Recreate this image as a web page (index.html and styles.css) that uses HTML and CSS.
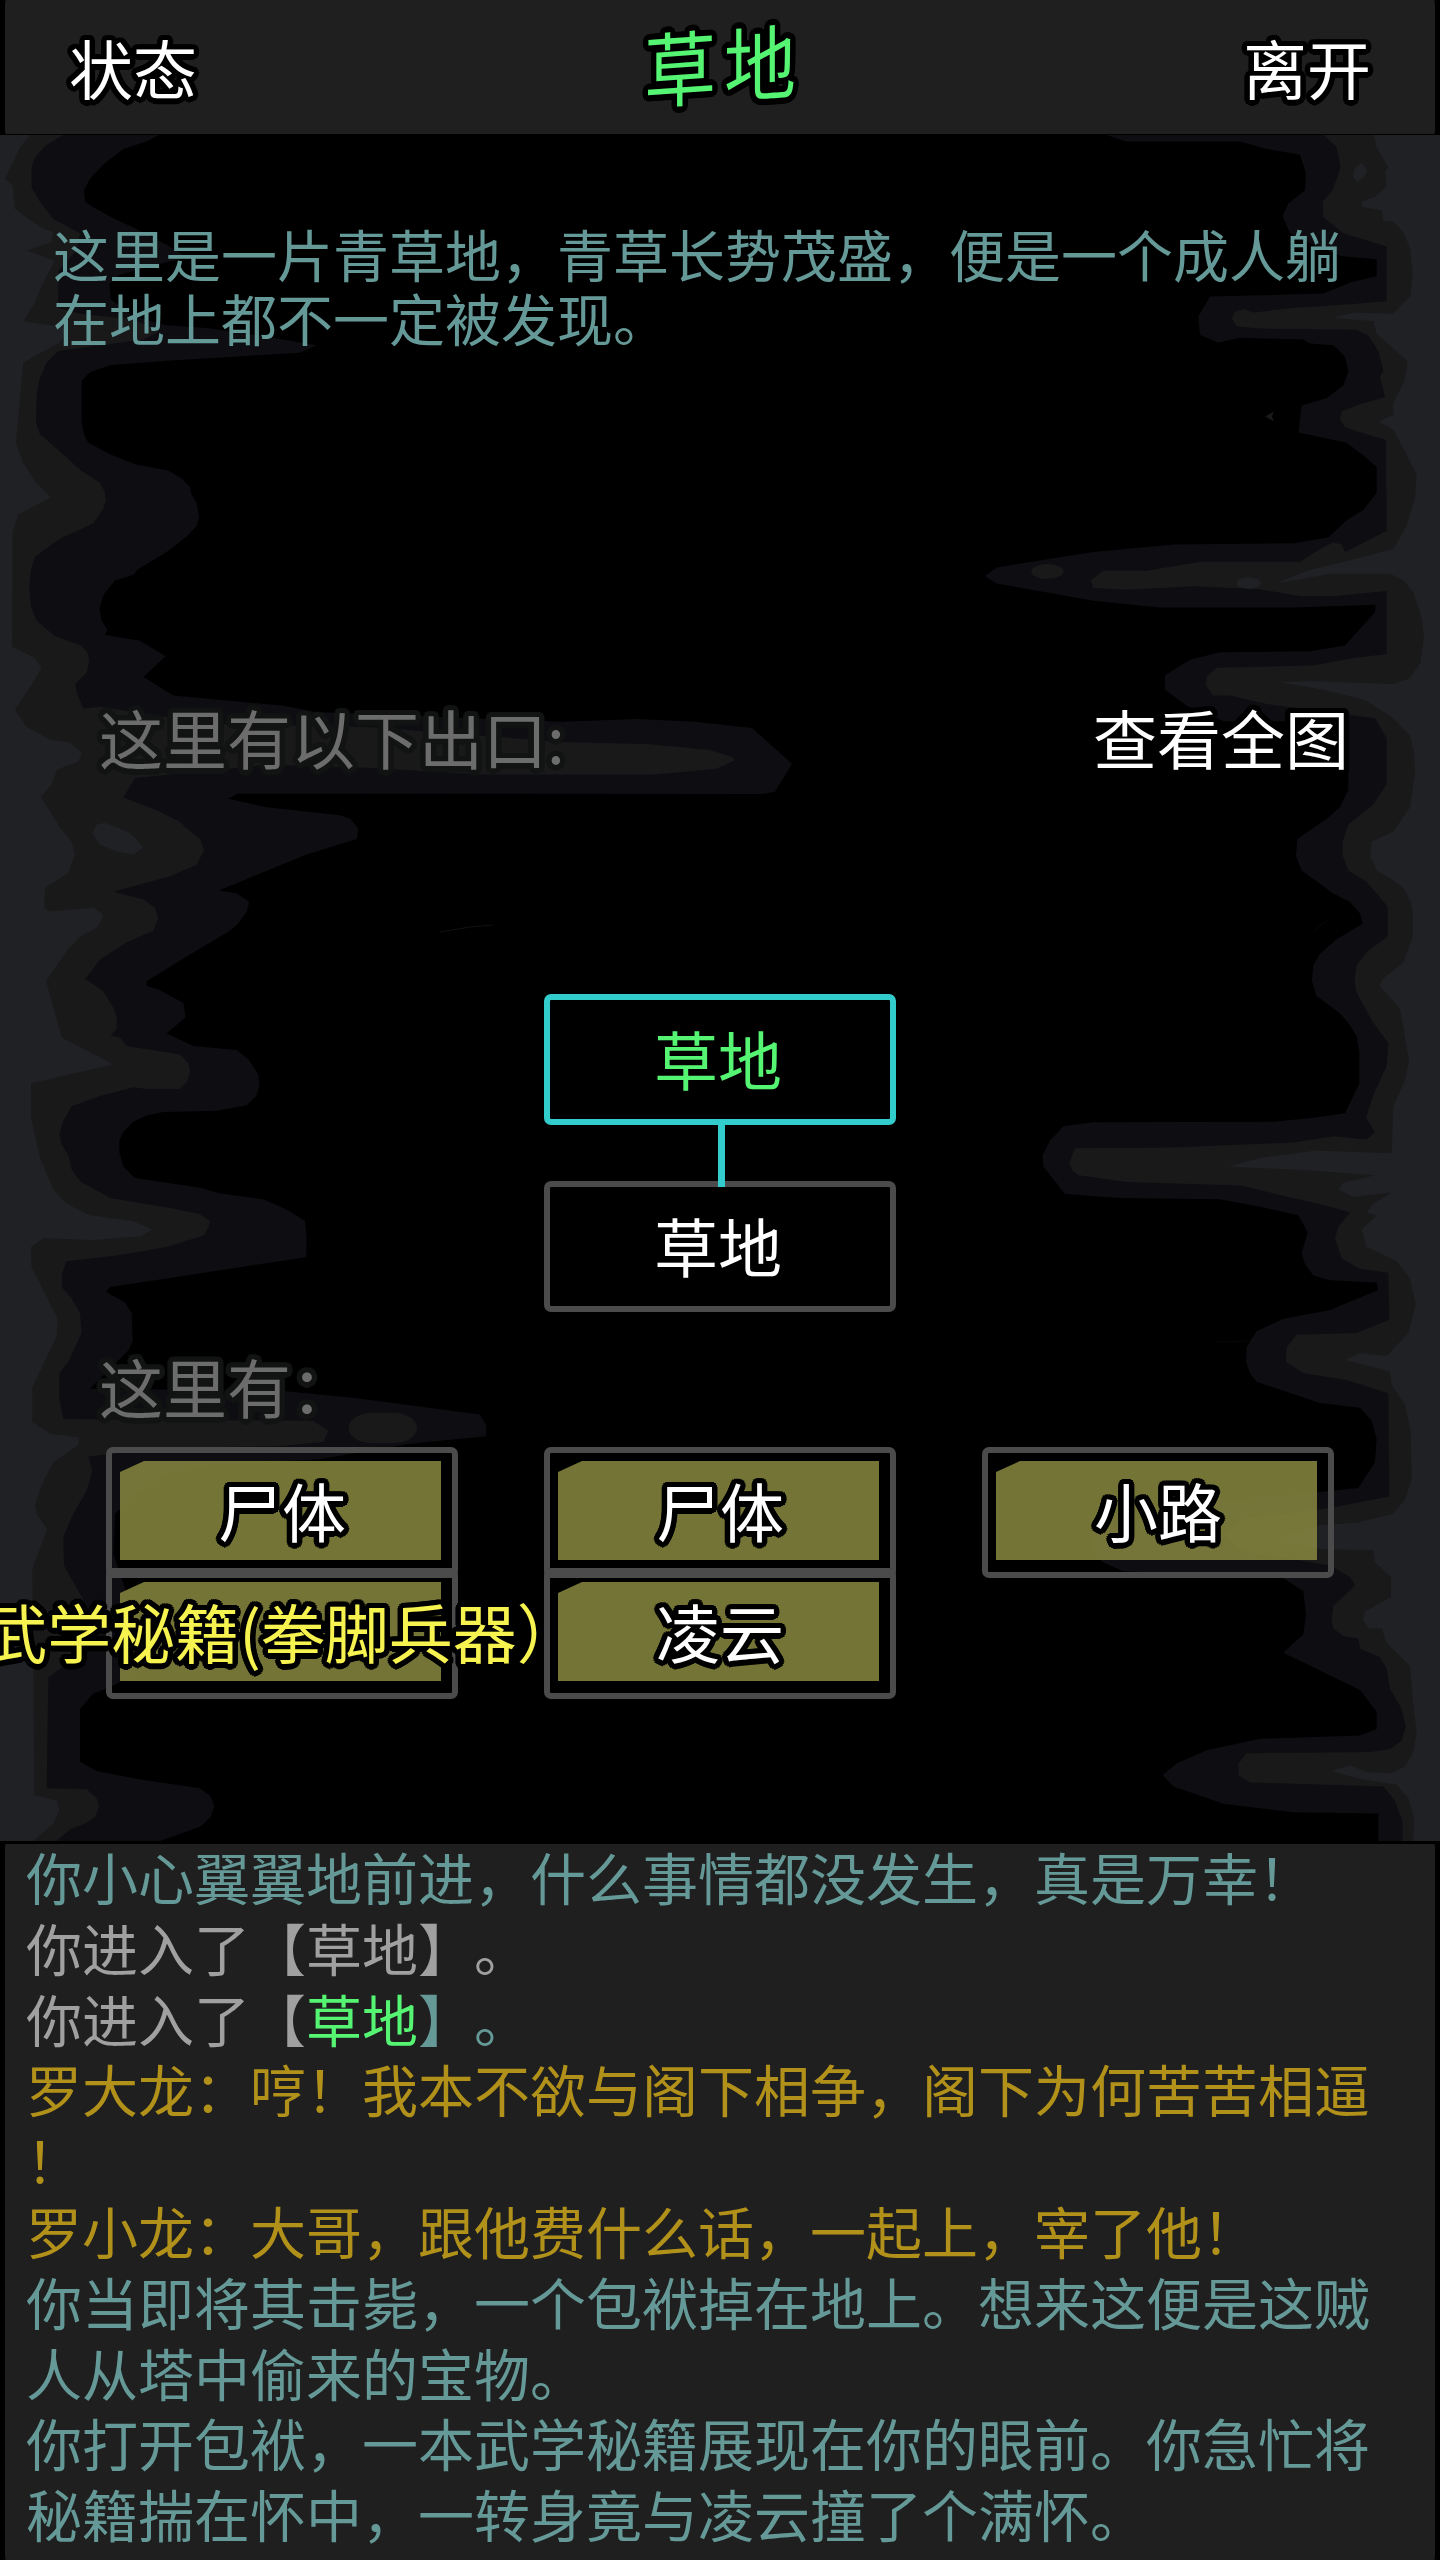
FILE: index.html
```html
<!DOCTYPE html>
<html lang="zh-CN">
<head>
<meta charset="utf-8">
<title>草地</title>
<link rel="stylesheet" href="styles.css">
</head>
<body>
<div class="screen">
  <header class="topbar">
    <span class="topbar-action outlined">状态</span>
    <h1 class="topbar-title outlined">草地</h1>
    <span class="topbar-action outlined">离开</span>
  </header>

  <main class="scene">
    <svg class="scene-art" viewBox="0 135 1440 1706" aria-hidden="true">
      <!-- left side, upper half -->
      <g transform="translate(0 130) scale(.33333 .574)">
        <polygon class="rock-far" points="0,5 490,5 440,20 370,33 310,60 270,85 252,105 255,125 290,138 345,155 400,170 450,185 500,200 560,222 460,236 360,252 328,268 332,295 400,325 500,340 620,345 800,360 950,375 900,388 700,395 500,402 330,410 270,422 245,437 245,510 253,532 265,545 330,565 410,583 505,593 545,607 570,622 573,633 590,650 597,675 590,690 560,708 500,735 415,765 400,775 345,785 310,810 298,835 305,855 322,870 315,880 420,890 497,917 430,953 520,985 850,1003 948,1014 1689,1031 1911,1026 2085,1031 2256,1042 2376,1104 2325,1153 2289,1157 714,1156 685,1165 800,1180 1020,1194 1050,1200 1075,1217 1070,1235 920,1262 760,1300 657,1325 710,1330 748,1345 740,1362 715,1382 690,1395 560,1440 437,1484 0,1484"/>
        <polygon class="rock-mid" points="0,5 200,5 135,28 105,48 95,65 95,100 120,125 160,155 240,180 230,210 175,245 175,310 240,320 400,330 480,350 430,365 175,385 140,405 118,435 110,460 108,510 120,530 180,560 240,592 300,615 313,628 318,645 310,660 280,685 180,712 105,743 93,765 88,790 92,830 110,855 165,882 240,897 262,910 268,925 260,945 225,965 230,980 250,1008 300,1005 640,1035 1100,1040 1689,1066 1950,1070 2130,1080 2195,1092 2205,1098 2150,1113 1963,1123 1446,1123 1102,1111 800,1106 405,1129 370,1163 470,1185 540,1205 560,1217 600,1235 612,1255 590,1280 510,1300 340,1327 430,1340 465,1355 475,1372 460,1395 380,1415 300,1445 250,1484 0,1484"/>
        <polygon class="rock-near" points="0,5 95,5 60,30 15,85 38,97 45,137 85,155 125,170 160,178 155,195 80,210 165,228 130,265 105,300 70,333 205,345 180,370 70,405 48,545 70,580 105,612 152,640 55,670 38,700 36,900 100,918 125,935 100,962 45,1010 80,1040 150,1062 210,1067 246,1085 235,1100 170,1115 155,1140 123,1162 180,1215 215,1240 225,1262 205,1295 135,1320 133,1355 150,1361 280,1355 305,1364 309,1372 290,1390 240,1405 200,1430 137,1484 0,1484"/>
        <polygon class="rock-near" points="277,1225 290,1210 315,1207 380,1222 400,1230 430,1250 400,1262 350,1257 300,1245"/>
      </g>
      <!-- left side, lower half -->
      <g transform="translate(0 980) scale(.33333 .574)">
        <polygon class="rock-far" points="0,0 440,0 440,10 480,18 550,40 557,65 500,93 580,115 710,122 745,138 775,165 778,185 768,203 740,218 650,228 490,230 440,236 400,247 370,265 358,280 358,300 370,325 405,345 600,362 660,372 790,382 860,400 915,420 920,450 918,483 700,502 500,520 330,535 318,543 375,562 395,580 398,630 385,645 355,663 270,712 850,716 1060,728 1440,757 1458,775 1458,795 1230,808 960,835 640,845 500,862 400,900 345,930 340,1000 375,1060 420,1150 400,1210 330,1232 280,1243 240,1270 240,1362 290,1378 420,1393 600,1408 632,1422 643,1440 632,1458 600,1475 480,1500 0,1500"/>
        <polygon class="rock-mid" points="0,0 262,0 310,20 340,48 350,65 350,85 332,97 360,100 380,115 540,130 565,145 570,160 560,178 540,190 440,190 400,187 300,202 215,220 190,245 178,270 185,287 205,305 215,330 240,350 330,380 520,398 600,408 630,420 625,432 610,445 500,465 350,480 200,490 187,510 185,535 215,555 240,580 245,615 225,640 205,665 178,685 178,730 190,765 940,768 985,785 970,805 840,812 490,815 265,830 277,855 260,890 220,930 190,970 192,1020 260,1090 250,1170 145,1215 140,1408 260,1410 290,1425 297,1440 285,1458 260,1468 210,1480 170,1500 0,1500"/>
        <rect class="rock-mid" x="1046" y="754" width="205" height="53" rx="70" ry="27"/>
        <polygon class="rock-near" points="0,0 137,0 185,100 340,147 93,180 93,240 120,310 160,365 200,390 270,410 400,420 457,435 420,447 280,453 130,450 93,465 95,500 173,590 170,620 97,710 97,770 150,790 237,797 235,810 160,840 125,880 105,915 112,932 142,957 97,1025 100,1180 103,1420 170,1430 178,1445 160,1470 100,1500 0,1500"/>
      </g>
      <!-- right side, upper half -->
      <g transform="translate(960 130) scale(.33333 .574)">
        <polygon class="rock-far" points="1440,5 420,5 500,20 840,20 920,33 1020,43 1038,75 1035,105 985,128 968,150 990,180 1060,200 1145,220 1250,225 1250,255 1175,265 1090,285 750,290 715,325 720,357 775,370 840,362 1030,365 1050,372 1120,375 1155,395 1165,420 1150,445 1100,467 1025,480 1016,527 1160,545 1210,567 1250,587 1250,632 1210,662 1160,680 1105,710 1000,720 640,722 400,735 110,762 75,777 110,790 400,820 600,832 1000,832 1247,827 1245,840 1155,898 1050,908 780,910 690,923 615,950 615,975 680,1003 790,1030 970,1030 1160,1060 1165,1120 1165,1150 1140,1180 1100,1200 1012,1235 1008,1265 1025,1290 1120,1330 1170,1345 1200,1365 1208,1383 1130,1410 1080,1435 1060,1455 1055,1484 1440,1484"/>
        <polygon class="rock-mid" points="1440,5 1085,5 1130,30 1142,65 1118,105 1088,125 1090,152 1150,180 1280,203 1280,298 1180,303 1000,310 880,318 850,312 825,317 815,328 830,342 900,346 1190,348 1225,358 1255,385 1270,420 1260,430 1275,465 1200,478 1145,490 1140,505 1155,518 1190,525 1278,540 1280,698 1155,735 1145,722 1120,718 1080,730 1020,752 720,752 560,768 430,768 392,785 400,798 500,801 700,795 900,800 1020,812 1130,812 1280,803 1280,913 1180,920 1060,933 770,937 740,952 738,968 760,985 810,985 920,1000 1245,1025 1280,1060 1280,1140 1240,1175 1165,1210 1148,1240 1148,1265 1165,1290 1220,1310 1283,1353 1283,1405 1220,1432 1190,1455 1183,1484 1440,1484"/>
        <ellipse class="rock-mid" cx="262" cy="769" rx="48" ry="13"/>
        <polygon class="rock-mid" points="916,499 942,490 936,499 942,508"/>
        <polyline class="rock-crack" points="1058,1400 1075,1388 1100,1378"/>
        <polygon class="rock-near" points="1440,5 1240,5 1250,30 1285,65 1275,72 1280,97 1250,115 1205,125 1205,134 1265,140 1270,158 1300,160 1330,178 1350,205 1358,250 1350,290 1300,320 1180,318 1118,327 1240,333 1250,355 1343,403 1335,435 1300,475 1300,497 1255,508 1300,522 1335,560 1370,600 1365,640 1340,690 1300,730 1200,745 1040,768 950,790 1110,773 1290,773 1330,785 1360,805 1385,850 1392,885 1380,930 1350,955 1300,965 1050,960 960,962 1090,975 1215,993 1300,1025 1350,1055 1362,1085 1365,1120 1350,1180 1300,1222 1235,1240 1230,1265 1250,1290 1300,1307 1330,1320 1352,1345 1358,1360 1358,1405 1330,1450 1258,1484 1440,1484"/>
        <ellipse class="rock-near" cx="866" cy="789" rx="36" ry="10"/>
        <polygon class="rock-near" points="1178,80 1185,66 1205,57 1223,70 1210,84 1190,91"/>
      </g>
      <!-- right side, lower half -->
      <g transform="translate(960 980) scale(.33333 .574)">
        <polygon class="rock-far" points="1440,0 1055,0 1070,28 1140,58 1165,75 1190,98 1198,125 1198,180 1155,232 1060,240 940,247 400,248 310,255 270,280 248,305 250,325 315,373 480,380 780,382 900,395 1015,410 1043,440 1025,475 1035,495 1060,515 1110,523 1250,527 1255,540 1110,575 970,590 890,612 860,640 858,665 870,685 890,700 1080,737 1200,745 1235,768 1250,800 1245,840 1195,885 1080,892 800,905 600,930 430,945 398,975 400,1000 430,1015 490,1030 970,1042 1030,1065 1038,1105 1030,1140 970,1172 1200,1237 1250,1275 1250,1305 1200,1316 900,1322 740,1342 650,1365 608,1385 640,1405 790,1435 1000,1450 1255,1452 1255,1500 1440,1500"/>
        <polygon class="rock-mid" points="1440,0 1183,0 1190,22 1235,70 1285,110 1280,150 1240,200 1218,240 1245,265 1220,278 1120,272 1000,283 640,292 345,293 328,318 335,330 355,340 500,352 840,358 1000,380 1110,395 1170,405 1135,430 1125,450 1145,485 1200,503 1285,510 1288,592 1190,615 1010,618 980,640 978,665 1030,685 1160,697 1285,720 1288,900 1110,920 850,940 790,965 850,995 1110,1020 1170,1040 1185,1055 1120,1090 1115,1115 1120,1130 1150,1143 1195,1147 1200,1165 1260,1180 1280,1200 1290,1235 1325,1270 1338,1300 1325,1325 1290,1340 1230,1345 860,1347 835,1365 835,1385 870,1398 1270,1405 1305,1430 1327,1465 1327,1500 1440,1500"/>
        <polyline class="rock-crack" points="762,631 870,629 882,622"/>
        <polygon class="rock-near" points="1440,0 1268,0 1258,10 1320,50 1347,140 1335,175 1300,220 1295,302 1070,297 900,310 805,325 1050,332 1245,340 1150,353 1135,365 1180,378 1295,370 1240,390 1220,405 1250,410 1205,435 1220,465 1310,490 1350,520 1367,565 1345,615 1280,655 1200,650 1155,662 1290,682 1295,705 1335,740 1352,785 1355,870 1335,905 1300,930 1190,945 1080,950 920,975 1090,992 1240,993 1245,1015 1293,1040 1293,1075 1215,1100 1210,1115 1225,1130 1265,1130 1280,1155 1350,1195 1360,1265 1370,1310 1360,1345 1335,1370 1290,1382 1220,1380 1170,1368 1115,1378 1200,1392 1310,1402 1345,1425 1362,1460 1360,1500 1440,1500"/>
      </g>
      <polyline class="rock-crack" points="440,932 470,927 493,925"/>
    </svg>

    <p class="description">这里是一片青草地，青草长势茂盛，便是一个成人躺<br>在地上都不一定被发现。</p>

    <div class="exits-head">
      <span class="section-label">这里有以下出口:</span>
      <span class="map-link outlined">查看全图</span>
    </div>

    <div class="map">
      <div class="room room-current">草地</div>
      <div class="path-link"></div>
      <div class="room">草地</div>
    </div>

    <div class="section-label things-head">这里有：</div>

    <div class="things">
      <div class="thing"><span class="thing-name outlined">尸体</span></div>
      <div class="thing"><span class="thing-name outlined">尸体</span></div>
      <div class="thing"><span class="thing-name outlined">小路</span></div>
      <div class="thing thing-rare"><span class="thing-name outlined">武学秘籍(拳脚兵器）</span></div>
      <div class="thing"><span class="thing-name outlined">凌云</span></div>
    </div>
  </main>

  <section class="log">
    <p>你小心翼翼地前进，什么事情都没发生，真是万幸！</p>
    <p class="log-plain">你进入了【草地】。</p>
    <p><span class="log-plain">你进入了【</span><span class="log-place">草地</span>】。</p>
    <p class="log-speech">罗大龙：哼！我本不欲与阁下相争，阁下为何苦苦相逼<br>！</p>
    <p class="log-speech">罗小龙：大哥，跟他费什么话，一起上，宰了他！</p>
    <p>你当即将其击毙，一个包袱掉在地上。想来这便是这贼<br>人从塔中偷来的宝物。</p>
    <p>你打开包袱，一本武学秘籍展现在你的眼前。你急忙将<br>秘籍揣在怀中，一转身竟与凌云撞了个满怀。</p>
  </section>
</div>
</body>
</html>
```
FILE: styles.css
```css
* {
  box-sizing: border-box;
}

body {
  margin: 0;
  background: #000;
}

p,
h1 {
  margin: 0;
  font-weight: inherit;
}

.screen {
  display: flex;
  flex-direction: column;
  width: 1440px;
  height: 2560px;
  overflow: hidden;
  background: #000;
  color: #fff;
  font-family: "Noto Sans CJK SC", sans-serif;
  font-size: 64px;
  font-weight: 400;
  line-height: 1;
  white-space: nowrap;
  text-spacing-trim: space-all;
}

/* round outline built from shadows on a 5.5px circle */
.outlined,
.section-label {
  --edge: #000;
  text-shadow:
    5.5px 0 0 var(--edge), 5.1px 2.1px 0 var(--edge),
    3.9px 3.9px 0 var(--edge), 2.1px 5.1px 0 var(--edge),
    0 5.5px 0 var(--edge), -2.1px 5.1px 0 var(--edge),
    -3.9px 3.9px 0 var(--edge), -5.1px 2.1px 0 var(--edge),
    -5.5px 0 0 var(--edge), -5.1px -2.1px 0 var(--edge),
    -3.9px -3.9px 0 var(--edge), -2.1px -5.1px 0 var(--edge),
    0 -5.5px 0 var(--edge), 2.1px -5.1px 0 var(--edge),
    3.9px -3.9px 0 var(--edge), 5.1px -2.1px 0 var(--edge),
    2px 2px 0 var(--edge), -2px -2px 0 var(--edge),
    2px -2px 0 var(--edge), -2px 2px 0 var(--edge);
}

.section-label {
  --edge: #121413;
  color: #6c6c6c;
}

/* top bar */

.topbar {
  display: flex;
  align-items: center;
  justify-content: space-between;
  flex: none;
  height: 135px;
  padding: 0 64px 3px;
  border: solid #000;
  border-width: 0 5px 1px;
  border-radius: 6px;
  background: #1f1f1f;
}

.topbar-title {
  color: #55f573;
  font-size: 72px;
  letter-spacing: 8px;
  transform: translate(4px, -4px) skewY(-4deg) scaleY(1.13);
}

/* scene */

.scene {
  position: relative;
  flex: none;
  height: 1706px;
  padding-top: 86px;
}

.scene-art {
  position: absolute;
  inset: 0;
  width: 1440px;
  height: 1706px;
}

.rock-far {
  fill: #0e0d12;
}

.rock-mid {
  fill: #19191a;
}

.rock-near {
  fill: #1f2124;
}

.rock-crack {
  fill: none;
  stroke: #121216;
  stroke-width: 1;
}

.description,
.exits-head,
.map,
.things-head,
.things {
  position: relative;
}

.description {
  height: 128px;
  padding-left: 53px;
  color: #659997;
  font-size: 56px;
  line-height: 64px;
}

.exits-head {
  display: flex;
  justify-content: space-between;
  margin-top: 355px;
  padding: 0 91px 0 99px;
}

.map {
  display: flex;
  flex-direction: column;
  align-items: center;
  margin-top: 226px;
}

.room {
  display: flex;
  align-items: center;
  justify-content: center;
  width: 352px;
  height: 131px;
  padding: 0 4px 5px 0;
  border: 6px solid #4b4b4b;
  border-radius: 7px;
}

.room-current {
  border-color: #33cccc;
  color: #55f573;
}

.path-link {
  position: relative;
  left: 1px;
  z-index: 1;
  width: 7px;
  height: 62px;
  margin-bottom: -6px;
  background: #33cccc;
}

.things-head {
  margin-top: 41px;
  padding-left: 99px;
}

.things {
  display: grid;
  grid-template-columns: repeat(3, 352px);
  grid-auto-rows: 131px;
  column-gap: 86px;
  margin-top: 30px;
  padding-left: 106px;
}

.thing {
  display: flex;
  align-items: center;
  justify-content: center;
  position: relative;
  height: 131px;
  padding-bottom: 7px;
  border: 6px solid #4b4b4b;
  border-radius: 7px;
}

.thing:nth-child(n + 4) {
  margin-top: -10px;
}

.thing::before {
  content: "";
  position: absolute;
  top: 8px;
  left: 8px;
  width: 321px;
  height: 99px;
  background: rgba(135, 135, 64, .86);
  clip-path: polygon(24px 0, 100% 0, 100% 100%, 0 100%, 0 11px);
}

.thing-name {
  position: relative;
  flex: none;
}

.thing-rare {
  z-index: 1;
  color: #f6f250;
}

/* message log */

.log {
  flex: 1;
  padding: 0 21px;
  border: solid #000;
  border-width: 3px 5px 0;
  border-radius: 6px;
  background: #1f1f1f;
  color: #659997;
  font-size: 56px;
  line-height: 70.8px;
}

.log p:first-child {
  margin-top: -3px;
}

.log-plain {
  color: #a0a0a0;
}

.log-place {
  color: #55f573;
}

.log-speech {
  color: #b1911a;
}
```
